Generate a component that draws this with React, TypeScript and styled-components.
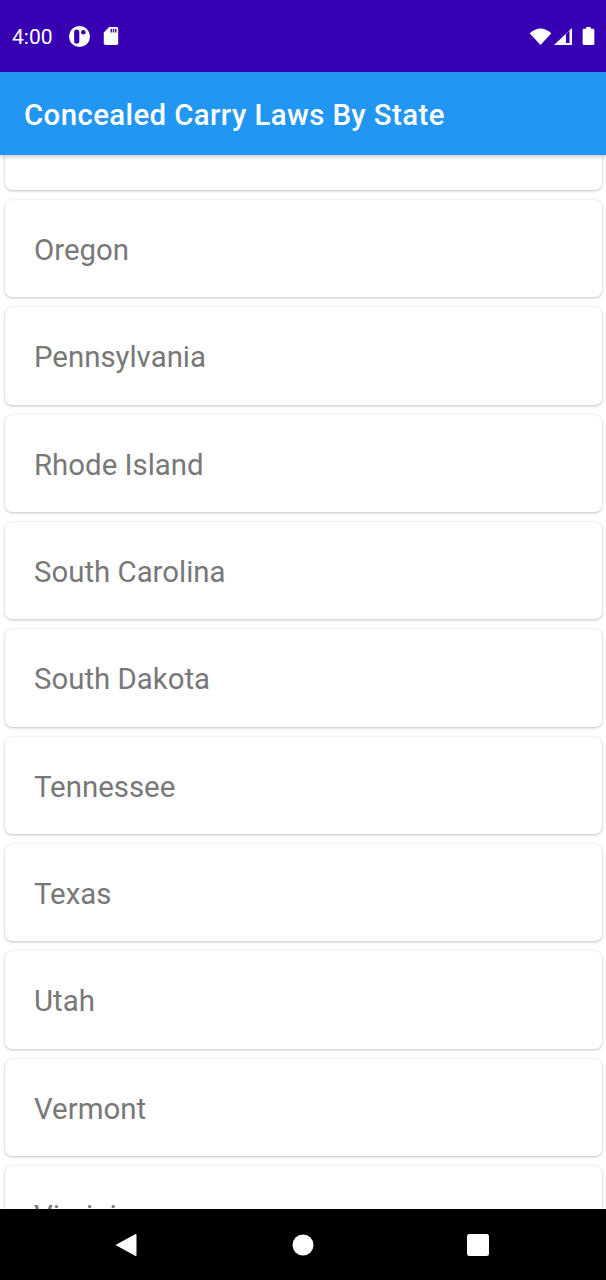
import React from "react";
import styled, { createGlobalStyle } from "styled-components";

const Global = createGlobalStyle`
  html, body { margin: 0; padding: 0; background: #fff; }
  body { font-family: Roboto, "Liberation Sans", sans-serif; }
`;

const Screen = styled.div`
  width: 606px;
  height: 1280px;
  display: flex;
  flex-direction: column;
  overflow: hidden;
  background: #fff;
`;

const StatusBar = styled.div`
  height: 72px;
  flex: none;
  display: flex;
  align-items: center;
  padding: 0 11px 0 12px;
  background: #3700b3;
  color: #fff;
`;

const Clock = styled.span`
  font-size: 21px;
  line-height: 24px;
  width: 57px;
  padding-top: 2px;
`;

const StatusGroup = styled.div<{ $gap: number }>`
  display: flex;
  align-items: center;
  gap: ${(p) => p.$gap}px;
`;

const Spacer = styled.div`
  flex: 1;
`;

const AppBar = styled.header`
  height: 83px;
  flex: none;
  box-sizing: border-box;
  display: flex;
  align-items: center;
  padding: 2px 24px 0;
  background: #2196f3;
  color: #fff;
  font-size: 29.4px;
  font-weight: 500;
  letter-spacing: 0.4px;
  box-shadow: 0 2px 4px rgba(0, 0, 0, 0.2);
  position: relative;
  z-index: 1;
`;

const List = styled.main`
  flex: 1;
  min-height: 0;
  overflow: hidden;
  display: flex;
  flex-direction: column;
  gap: 10px;
  padding: 0 4.5px;
  background: #fff;
`;

const Card = styled.div<{ $cut?: boolean }>`
  flex: none;
  box-sizing: border-box;
  height: ${(p) => (p.$cut ? "35px" : "97.33px")};
  display: flex;
  align-items: center;
  padding: 3px 29.5px 0;
  background: #fff;
  border-radius: ${(p) => (p.$cut ? "0 0 7px 7px" : "7px")};
  box-shadow: 0 1px 3px rgba(0, 0, 0, 0.22), 0 0 2px rgba(0, 0, 0, 0.08);
  color: #787878;
  font-size: 29.4px;
`;

const NavBar = styled.nav`
  height: 71px;
  flex: none;
  display: flex;
  align-items: center;
  background: #000;
  position: relative;
  z-index: 1;
`;

const NavSlot = styled.div<{ $left: number }>`
  width: 24px;
  height: 24px;
  margin-left: ${(p) => p.$left}px;
  display: flex;
  align-items: center;
  justify-content: center;
  svg { display: block; }
`;

const states = ["Oregon", "Pennsylvania", "Rhode Island", "South Carolina", "South Dakota", "Tennessee", "Texas", "Utah", "Vermont", "Virginia"];

export default function App() {
  return (
    <Screen>
      <Global />
      <StatusBar>
        <Clock>4:00</Clock>
        <StatusGroup $gap={13}>
          <svg width="21" height="21" viewBox="0 0 22 22">
            <circle cx="11" cy="11" r="11" fill="#fff" />
            <rect x="5.4" y="3.6" width="5.4" height="14.8" rx="2.7" fill="#3700b3" />
            <circle cx="15" cy="6.6" r="2.4" fill="#3700b3" />
          </svg>
          <svg width="16" height="18" viewBox="0 0 16 20">
            <path d="M6 0 H14 Q16 0 16 2 V18 Q16 20 14 20 H2 Q0 20 0 18 V6 Z" fill="#fff" />
            <path d="M7.5 2 H9 V6 H7.5 Z M10 2 H11.5 V6 H10 Z M12.5 2 H14 V6 H12.5 Z" fill="#3700b3" />
          </svg>
        </StatusGroup>
        <Spacer />
        <StatusGroup $gap={2}>
          <svg width="23" height="17" viewBox="0 0 23 18">
            <path d="M0 5.5 Q11.5 -4.5 23 5.5 L11.5 18 Z" fill="#fff" />
          </svg>
          <svg width="18" height="17" viewBox="0 0 19 18">
            <path d="M0 18 L19 0 V18 Z" fill="#fff" />
            <path d="M12.6 6.4 L16.4 2.6 V16 H12.6 Z" fill="#3700b3" />
          </svg>
          <svg width="13" height="18" viewBox="0 0 13 20" style={{ marginLeft: 8 }}>
            <path d="M4 0 H9 V2 H11.5 Q13 2 13 3.5 V18.5 Q13 20 11.5 20 H1.5 Q0 20 0 18.5 V3.5 Q0 2 1.5 2 H4 Z" fill="#fff" />
          </svg>
        </StatusGroup>
      </StatusBar>
      <AppBar>Concealed Carry Laws By State</AppBar>
      <List>
        <Card $cut />
        {states.map((s) => (
          <Card key={s}>{s}</Card>
        ))}
      </List>
      <NavBar>
        <NavSlot $left={114}>
          <svg width="22" height="24" viewBox="0 0 21 24">
            <path d="M0 12 L20 1 Q21 0.6 21 2 V22 Q21 23.4 20 23 Z" fill="#fff" />
          </svg>
        </NavSlot>
        <NavSlot $left={153}>
          <svg width="22" height="22" viewBox="0 0 22 22">
            <circle cx="11" cy="11" r="10.5" fill="#fff" />
          </svg>
        </NavSlot>
        <NavSlot $left={151}>
          <svg width="22" height="22" viewBox="0 0 22 22">
            <rect x="0" y="0" width="22" height="22" rx="2.5" fill="#fff" />
          </svg>
        </NavSlot>
      </NavBar>
    </Screen>
  );
}
